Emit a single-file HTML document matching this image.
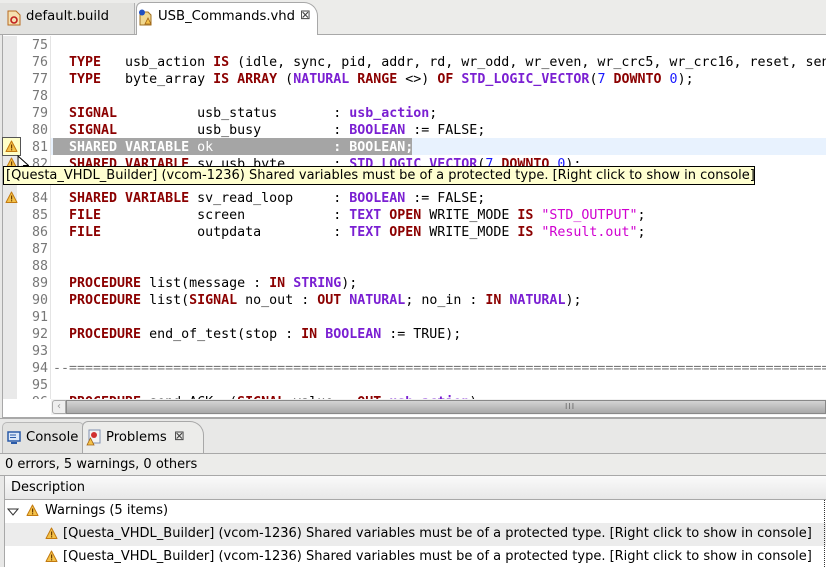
<!DOCTYPE html>
<html><head><meta charset="utf-8"><style>
body{margin:0;width:826px;height:567px;overflow:hidden;background:#e8e8e7;font-family:"DejaVu Sans","Liberation Sans",sans-serif;font-size:13px;color:#000;position:relative}
.abs{position:absolute}
.code{font-family:"DejaVu Sans Mono","Liberation Mono",monospace;font-size:13.3px;white-space:pre;line-height:17px}
.k{color:#8b0000;font-weight:bold}
.t{color:#7a1fd2;font-weight:bold}
.n{color:#1a1aff}
.s{color:#d000d0}
.ln{position:absolute;left:17px;width:31px;text-align:right;color:#777;}
.cl{position:absolute;left:69px}
</style></head><body>
<svg width="0" height="0" style="position:absolute"><defs><symbol id="warn" viewBox="0 0 13 13"><path d="M6.5 1 L12 11.5 L1 11.5 Z" fill="#f4c24a" stroke="#c27a10" stroke-width="1" stroke-linejoin="round"/><rect x="6" y="4.5" width="1.2" height="4" fill="#6a3a00"/><rect x="6" y="9.2" width="1.2" height="1.2" fill="#6a3a00"/></symbol></defs></svg>

<div class="abs" style="left:0;top:0;width:826px;height:34px;background:#ececea;border-bottom:1px solid #a8a8a8"></div>
<div class="abs" style="left:0;top:3px;width:134px;height:31px;background:#e2e2e0;border-right:1px solid #b0b0b0"></div>
<div class="abs" style="left:136px;top:2px;width:180px;height:33px;background:#fff;border:1px solid #a8a8a8;border-bottom:none;border-radius:6px 14px 0 0"></div>
<svg class="abs" style="left:7px;top:10px" width="14" height="16"><path d="M1 1h8l4 4v10H1z" fill="#f5e0b0" stroke="#b86a20"/><circle cx="7" cy="10" r="3" fill="none" stroke="#c02020" stroke-width="1.6"/></svg>
<div class="abs" style="left:26px;top:9px;font-size:13.2px">default.build</div>
<svg class="abs" style="left:138px;top:9px" width="15" height="17"><path d="M2 3h8l3 3v10H2z" fill="#f0d890" stroke="#a07020"/><circle cx="4" cy="3.5" r="3" fill="#2050c0"/><path d="M7 15l3-6 3 6z" fill="#f4c24a" stroke="#a06010" stroke-width=".8"/></svg>
<div class="abs" style="left:158px;top:9px;font-size:13.2px">USB_Commands.vhd</div>
<div class="abs" style="left:300px;top:8px;font-size:13px;color:#444">⊠</div>

<div class="abs" style="left:2px;top:35px;width:824px;height:382px;background:#fff;border-left:1px solid #a8a8a8;border-bottom:1px solid #a8a8a8"></div>
<div class="abs" style="left:3px;top:36px;width:14px;height:363px;background:#e9e9e9"></div>
<div class="abs" style="left:50px;top:36px;width:1px;height:363px;background:#e4e4e4"></div>
<div class="abs" style="left:51px;top:138px;width:775px;height:17px;background:#e8f2fe"></div>
<div class="abs" style="left:53px;top:138px;width:359px;height:17px;background:#a5a5a5"></div>
<div class="abs code" style="left:0;top:37px;width:826px;height:362px;overflow:hidden">
<div class="ln" style="top:0">75</div>
<div class="ln" style="top:17px">76</div><div class="cl" style="top:17px"><span class="k">TYPE</span>   usb_action <span class="k">IS</span> (idle, sync, pid, addr, rd, wr_odd, wr_even, wr_crc5, wr_crc16, reset, send_ack);</div>
<div class="ln" style="top:34px">77</div><div class="cl" style="top:34px"><span class="k">TYPE</span>   byte_array <span class="k">IS</span> <span class="k">ARRAY</span> (<span class="t">NATURAL</span> <span class="k">RANGE</span> &lt;&gt;) <span class="k">OF</span> <span class="t">STD_LOGIC_VECTOR</span>(<span class="n">7</span> <span class="k">DOWNTO</span> <span class="n">0</span>);</div>
<div class="ln" style="top:51px">78</div>
<div class="ln" style="top:68px">79</div><div class="cl" style="top:68px"><span class="k">SIGNAL</span>          usb_status       : <span class="t">usb_action</span>;</div>
<div class="ln" style="top:85px">80</div><div class="cl" style="top:85px"><span class="k">SIGNAL</span>          usb_busy         : <span class="t">BOOLEAN</span> := FALSE;</div>
<div class="ln" style="top:102px">81</div><div class="cl" style="top:102px;color:#fff;font-weight:bold">SHARED VARIABLE <span style="font-weight:normal">ok</span>               : BOOLEAN;</div>
<div class="ln" style="top:119px">82</div><div class="cl" style="top:119px"><span class="k">SHARED VARIABLE</span> sv_usb_byte      : <span class="t">STD_LOGIC_VECTOR</span>(<span class="n">7</span> <span class="k">DOWNTO</span> <span class="n">0</span>);</div>
<div class="ln" style="top:136px">83</div>
<div class="ln" style="top:153px">84</div><div class="cl" style="top:153px"><span class="k">SHARED VARIABLE</span> sv_read_loop     : <span class="t">BOOLEAN</span> := FALSE;</div>
<div class="ln" style="top:170px">85</div><div class="cl" style="top:170px"><span class="k">FILE</span>            screen           : <span class="t">TEXT</span> <span class="k">OPEN</span> WRITE_MODE <span class="k">IS</span> <span class="s">"STD_OUTPUT"</span>;</div>
<div class="ln" style="top:187px">86</div><div class="cl" style="top:187px"><span class="k">FILE</span>            outpdata         : <span class="t">TEXT</span> <span class="k">OPEN</span> WRITE_MODE <span class="k">IS</span> <span class="s">"Result.out"</span>;</div>
<div class="ln" style="top:204px">87</div>
<div class="ln" style="top:221px">88</div>
<div class="ln" style="top:238px">89</div><div class="cl" style="top:238px"><span class="k">PROCEDURE</span> list(message : <span class="k">IN</span> <span class="t">STRING</span>);</div>
<div class="ln" style="top:255px">90</div><div class="cl" style="top:255px"><span class="k">PROCEDURE</span> list(<span class="k">SIGNAL</span> no_out : <span class="k">OUT</span> <span class="t">NATURAL</span>; no_in : <span class="k">IN</span> <span class="t">NATURAL</span>);</div>
<div class="ln" style="top:272px">91</div>
<div class="ln" style="top:289px">92</div><div class="cl" style="top:289px"><span class="k">PROCEDURE</span> end_of_test(stop : <span class="k">IN</span> <span class="t">BOOLEAN</span> := TRUE);</div>
<div class="ln" style="top:306px">93</div>
<div class="ln" style="top:323px">94</div><div class="cl" style="top:323px;left:53px;color:#777">--==========================================================================================================</div>
<div class="ln" style="top:340px">95</div>
<div class="ln" style="top:357px">96</div><div class="cl" style="top:357px"><span class="k">PROCEDURE</span> send_ACK  (<span class="k">SIGNAL</span> value : <span class="k">OUT</span> <span class="t">usb_action</span>);</div>
</div>
<div class="abs" style="left:2px;top:137px;width:19px;height:19px;background:#ffffc8;border:1px solid #555;box-sizing:border-box"></div>
<svg class="abs" style="left:5px;top:140px" width="13" height="13"><use href="#warn"/></svg>
<svg class="abs" style="left:5px;top:157px" width="13" height="13"><use href="#warn"/></svg>
<svg class="abs" style="left:5px;top:191px" width="13" height="13"><use href="#warn"/></svg>
<svg class="abs" style="left:17px;top:155px" width="12" height="18"><path d="M1 1v14l3.5-3.5 3 5.5 2-1-3-5.5h5z" fill="#fff" stroke="#000" stroke-width="1"/></svg>
<div class="abs" style="left:3px;top:166px;width:752px;height:19px;background:#ffffd0;border:1px solid #000;box-sizing:border-box;font-size:13px;line-height:17px;padding-left:2px;white-space:nowrap">[Questa_VHDL_Builder] (vcom-1236) Shared variables must be of a protected type. [Right click to show in console]</div>
<div class="abs" style="left:51px;top:399px;width:775px;height:16px;background:#f2f2f2"></div>
<div class="abs" style="left:52px;top:400px;width:14px;height:14px;background:#eee;border:1px solid #aaa;box-sizing:border-box;border-radius:3px 0 0 3px;color:#999;font-size:10px;line-height:12px;text-align:center">‹</div>
<div class="abs" style="left:66px;top:400px;width:760px;height:14px;background:linear-gradient(#d4d4d4,#a8a8a8);border:1px solid #888;box-sizing:border-box"></div>
<div class="abs" style="left:565px;top:402px;font-size:8px;color:#666;letter-spacing:1px">III</div>

<div class="abs" style="left:0;top:418px;width:826px;height:1px;background:#a8a8a8"></div>
<div class="abs" style="left:2px;top:422px;width:80px;height:31px;background:#e2e2e0;border:1px solid #b8b8b8;border-bottom:none;border-radius:5px 5px 0 0"></div>
<div class="abs" style="left:82px;top:421px;width:120px;height:32px;background:#ececea;border:1px solid #a8a8a8;border-bottom:none;border-radius:6px 14px 0 0"></div>
<svg class="abs" style="left:7px;top:431px" width="14" height="13"><rect x="1" y="1" width="12" height="9" fill="#dce8f8" stroke="#2a5aa8" stroke-width="1.5"/><rect x="3" y="3.5" width="6" height="1" fill="#2a5aa8"/><rect x="3" y="6" width="6" height="1" fill="#2a5aa8"/><rect x="4" y="11" width="6" height="2" fill="#2a5aa8"/></svg>
<div class="abs" style="left:26px;top:430px;font-size:13.2px">Console</div>
<svg class="abs" style="left:86px;top:429px" width="16" height="17"><rect x="3" y="1" width="11" height="13" fill="#f4f4f4" stroke="#8090b0"/><circle cx="8" cy="6" r="3" fill="#d03030"/><path d="M1 16l3.5-7 3.5 7z" fill="#f4c24a" stroke="#a06010" stroke-width=".8"/></svg>
<div class="abs" style="left:106px;top:430px;font-size:13.2px">Problems</div>
<div class="abs" style="left:174px;top:429px;font-size:13px;color:#444">⊠</div>
<div class="abs" style="left:0;top:453px;width:826px;height:1px;background:#a8a8a8"></div>
<div class="abs" style="left:0;top:454px;width:826px;height:21px;background:#ececea;border-bottom:1px solid #a8a8a8"></div>
<div class="abs" style="left:5px;top:457px;font-size:13px">0 errors, 5 warnings, 0 others</div>
<div class="abs" style="left:4px;top:476px;width:822px;height:23px;background:linear-gradient(#fafafa,#e8e8e8);border-bottom:1px solid #a8a8a8;border-left:1px solid #a8a8a8"></div>
<div class="abs" style="left:11px;top:480px;font-size:13px">Description</div>
<div class="abs" style="left:4px;top:500px;width:822px;height:67px;background:#fff;border-left:1px solid #a8a8a8"></div>
<div class="abs" style="left:5px;top:523px;width:821px;height:23px;background:#ececec"></div>
<svg class="abs" style="left:7px;top:507px" width="12" height="10"><path d="M1 2h10L6 8z" fill="#fff" stroke="#333"/></svg>
<svg class="abs" style="left:26px;top:504px" width="13" height="13"><use href="#warn"/></svg>
<div class="abs" style="left:45px;top:503px;font-size:13px">Warnings (5 items)</div>
<svg class="abs" style="left:45px;top:527px" width="13" height="13"><use href="#warn"/></svg>
<div class="abs" style="left:63px;top:526px;font-size:13px;white-space:nowrap">[Questa_VHDL_Builder] (vcom-1236) Shared variables must be of a protected type. [Right click to show in console]</div>
<svg class="abs" style="left:45px;top:550px" width="13" height="13"><use href="#warn"/></svg>
<div class="abs" style="left:63px;top:549px;font-size:13px;white-space:nowrap">[Questa_VHDL_Builder] (vcom-1236) Shared variables must be of a protected type. [Right click to show in console]</div>
<div class="abs" style="left:824px;top:500px;height:67px;border-left:1px dotted #333"></div>
</body></html>
